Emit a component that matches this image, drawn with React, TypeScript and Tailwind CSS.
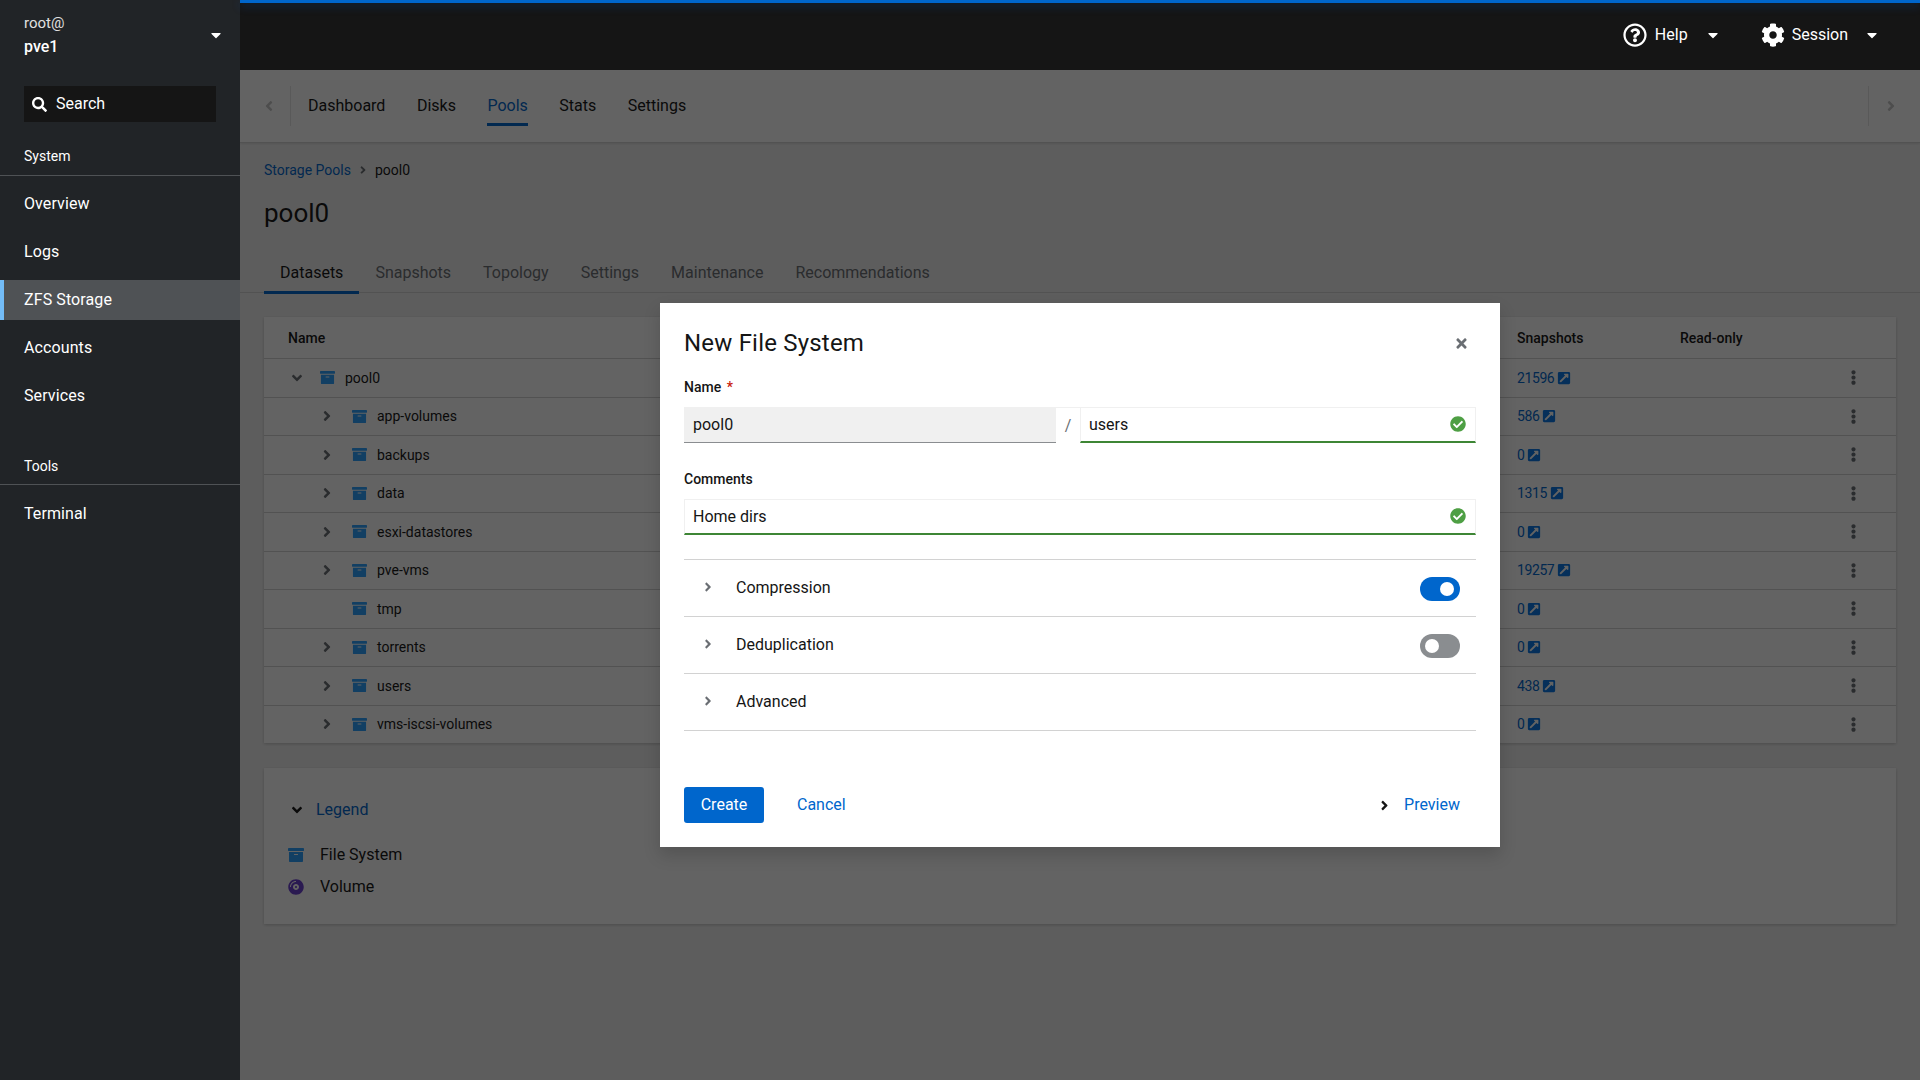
import React from "react";
import {
  FaAngleRight, FaAngleDown, FaEllipsisV, FaExternalLinkSquareAlt, FaCheckCircle, FaTimes,
  FaCaretDown, FaRegQuestionCircle, FaCog, FaSearch, FaArchive, FaCompactDisc,
} from "react-icons/fa";

const rows = [
  { name: "pool0", snaps: "21596", root: true, chev: true },
  { name: "app-volumes", snaps: "586", chev: true },
  { name: "backups", snaps: "0", chev: true },
  { name: "data", snaps: "1315", chev: true },
  { name: "esxi-datastores", snaps: "0", chev: true },
  { name: "pve-vms", snaps: "19257", chev: true },
  { name: "tmp", snaps: "0", chev: false },
  { name: "torrents", snaps: "0", chev: true },
  { name: "users", snaps: "438", chev: true },
  { name: "vms-iscsi-volumes", snaps: "0", chev: true },
];

function NavItem({ label, active }: { label: string; active?: boolean }) {
  return (
    <div className={active ? "h-10 flex items-center pl-5 border-l-4 border-[#73bcf7] bg-[#4f5255] text-white tracking-[0.1px]" : "h-10 flex items-center pl-6 text-white tracking-[0.1px]"}>
      {label}
    </div>
  );
}

function Sidebar() {
  return (
    <aside className="w-60 shrink-0 bg-[#212427] text-white flex flex-col">
      <div className="h-[70px] relative pl-6 pt-[11px] leading-[24px]">
        <div className="text-[15px] text-[#e0e0e0]">root@</div>
        <div className="font-medium">pve1</div>
        <FaCaretDown className="absolute left-[208px] top-[27px] text-white" size={16} />
      </div>
      <div className="mx-6 mt-4 h-9 bg-[#151515] flex items-center pl-2 gap-2">
        <FaSearch size={15} className="text-white" />
        <span className="ml-[1px]">Search</span>
      </div>
      <div className="mt-[24px] h-[30px] border-b border-[#4f5255] pl-6 text-sm leading-[20px]">System</div>
      <div className="flex flex-col gap-2 mt-2">
        <NavItem label="Overview" />
        <NavItem label="Logs" />
        <NavItem label="ZFS Storage" active />
        <NavItem label="Accounts" />
        <NavItem label="Services" />
      </div>
      <div className="mt-[40px] h-[29px] border-b border-[#4f5255] pl-6 text-sm leading-[20px]">Tools</div>
      <div className="mt-[9px]">
        <NavItem label="Terminal" />
      </div>
    </aside>
  );
}

function Header() {
  return (
    <header className="h-[70px] shrink-0 bg-[#151515] text-white relative flex items-center justify-end">
      <div className="absolute left-0 right-0 top-0 h-[3px] bg-[#0066cc] shadow-[0_3px_8px_rgba(0,80,170,0.45)]" />
      <FaRegQuestionCircle size={24} className="mr-[8px]" />
      <span>Help</span>
      <FaCaretDown size={16} className="ml-[17px] mr-[40px]" />
      <FaCog size={24} className="mr-[7px]" />
      <span>Session</span>
      <FaCaretDown size={16} className="ml-[16px] mr-[40px]" />
    </header>
  );
}

function Ext() {
  return <FaExternalLinkSquareAlt size={14} className="text-[#0a78e6] ml-[3px]" />;
}

function Main() {
  return (
    <div className="absolute inset-0 bg-[#f0f0f0] text-[#151515] overflow-hidden">
      <div className="h-[73px] bg-white border-b border-[#d2d2d2] shadow-[0_1px_2px_rgba(0,0,0,0.1)] flex items-center relative">
        <div className="w-[51px] h-10 flex items-center justify-end pr-[13px] border-r border-[#e4e4e4] text-[#c5c5c5]">
          <FaAngleRight size={16} className="rotate-180" />
        </div>
        <div className="flex gap-[31.5px] ml-[17px] h-10">
          {["Dashboard", "Disks", "Pools", "Stats", "Settings"].map((t) => (
            <div key={t} className={t === "Pools" ? "h-10 flex items-center border-b-[3px] border-[#0066cc] text-[#0066cc] pt-[3px]" : "h-10 flex items-center text-[#151515]"}>{t}</div>
          ))}
        </div>
        <div className="ml-auto w-[52px] h-10 flex items-center justify-start pl-[14px] border-l border-[#e4e4e4] text-[#c5c5c5]">
          <FaAngleRight size={16} />
        </div>
      </div>

      <div className="px-6 pt-[17px] h-[75px] text-sm flex items-start">
        <div className="flex items-center h-5">
          <span className="text-[#0066cc]">Storage Pools</span>
          <FaAngleRight size={12} className="mx-[6px] text-[#6a6e73]" />
          <span>pool0</span>
        </div>
      </div>
      <div className="px-6 -mt-[23px] text-[26px] leading-[36px] h-[36px]">pool0</div>

      <div className="mt-[28px] h-[34px] border-b border-[#d2d2d2] flex pl-6 text-[#6a6e73]">
        {["Datasets", "Snapshots", "Topology", "Settings", "Maintenance", "Recommendations"].map((t, i) => (
          <div key={t} className={i === 0 ? "h-[35px] px-4 pt-[2px] border-b-[3px] border-[#0066cc] text-[#151515]" : "h-[34px] px-4 pt-[2px]"}>{t}</div>
        ))}
      </div>

      <div className="mx-6 mt-6 bg-white shadow-[0_1px_3px_rgba(0,0,0,0.2)]">
        <div className="h-[41px] flex items-center text-sm font-medium">
          <div className="w-[1253px] pl-[24px]">Name</div>
          <div className="w-[163px]">Snapshots</div>
          <div>Read-only</div>
        </div>
        {rows.map((r) => (
          <div key={r.name} className="h-[38.5px] border-t border-[#d2d2d2] flex items-center text-sm">
            <div className={r.root ? "w-[1253px] pl-[26px] flex items-center" : "w-[1253px] pl-[56px] flex items-center"}>
              <div className={r.root ? "w-[14px] mr-[16px] flex justify-center text-[#6a6e73]" : "w-[14px] mr-[18px] flex justify-center text-[#6a6e73]"}>
                {r.chev ? (r.root ? <FaAngleDown size={16} /> : <FaAngleRight size={16} />) : null}
              </div>
              <FaArchive size={15} className="text-[#2ba0ff] mr-[10px]" />
              <span>{r.name}</span>
            </div>
            <div className="w-[163px] flex items-center text-[#0066cc] tracking-[-0.4px]">
              <span>{r.snaps}</span>
              <Ext />
            </div>
            <div className="flex-1" />
            <div className="w-[50px] text-[#6a6e73]"><FaEllipsisV size={15} /></div>
          </div>
        ))}
      </div>

      <div className="mx-6 mt-[25px] h-[156px] bg-white shadow-[0_1px_3px_rgba(0,0,0,0.2)] pl-6 pt-[30px]">
        <div className="flex items-center h-6 text-[#0066cc]">
          <FaAngleDown size={16} className="ml-[1px] mr-[11px] text-[#151515]" />
          <span>Legend</span>
        </div>
        <div className="flex items-center h-6 mt-[21px]">
          <FaArchive size={16} className="text-[#2ba0ff] mr-4" />
          <span>File System</span>
        </div>
        <div className="flex items-center h-6 mt-2">
          <FaCompactDisc size={16} className="text-[#6b3fd0] mr-4" />
          <span>Volume</span>
        </div>
      </div>
    </div>
  );
}

function Accordion({ label, toggle }: { label: string; toggle?: "on" | "off" }) {
  return (
    <div className="h-[57px] border-b border-[#d2d2d2] flex items-center pl-[19px] pr-4 text-[#151515]">
      <FaAngleRight size={14} className="text-[#6a6e73] w-[10px] mr-[23px] -mt-[2px]" />
      <span>{label}</span>
      {toggle === "on" && (
        <div className="ml-auto mt-[2px] w-10 h-6 rounded-full bg-[#0066cc] flex items-center justify-end pr-[6px]">
          <div className="w-[14px] h-[14px] rounded-full bg-white" />
        </div>
      )}
      {toggle === "off" && (
        <div className="ml-auto mt-[2px] w-10 h-6 rounded-full bg-[#8a8d90] flex items-center justify-start pl-[5px]">
          <div className="w-[14px] h-[14px] rounded-full bg-white" />
        </div>
      )}
    </div>
  );
}

function Modal() {
  return (
    <div className="w-[840px] h-[544px] bg-white shadow-[0_8px_16px_rgba(3,3,3,0.16)] px-6 pt-[24px] text-[#151515] relative">
      <div className="text-[24px] leading-[32px] h-[32px] font-normal tracking-[0.2px]">New File System</div>
      <FaTimes size={15} className="absolute left-[794px] top-[33px] text-[#6a6e73]" />
      <div className="mt-[18px] h-5 text-sm font-medium leading-5">
        Name <span className="text-[#c9190b] ml-[2px]">*</span>
      </div>
      <div className="mt-[10px] h-9 flex">
        <div className="w-[372px] h-9 bg-[#f0f0f0] border-b border-[#8a8d90] flex items-center pl-[9px] text-[#151515]">pool0</div>
        <div className="w-[24px] h-9 flex items-center justify-center border-t border-[#f0f0f0] text-[#6a6e73]">/</div>
        <div className="flex-1 h-9 border border-[#f0f0f0] border-b-2 border-b-[#3e8635] flex items-center pl-2 pr-[9px] justify-between">
          <span>users</span>
          <FaCheckCircle size={16} className="text-[#4e9f44] -mt-[1px]" />
        </div>
      </div>
      <div className="mt-[26px] h-5 text-sm font-medium leading-5">Comments</div>
      <div className="mt-[10px] h-9 border border-[#f0f0f0] border-b-2 border-b-[#3e8635] flex items-center pl-2 pr-[9px] justify-between">
        <span>Home dirs</span>
        <FaCheckCircle size={16} className="text-[#4e9f44] -mt-[1px]" />
      </div>
      <div className="mt-[24px] border-t border-[#d2d2d2]">
        <Accordion label="Compression" toggle="on" />
        <Accordion label="Deduplication" toggle="off" />
        <Accordion label="Advanced" />
      </div>
      <div className="mt-[56px] h-9 flex items-center">
        <div className="w-20 h-9 rounded-[3px] bg-[#0066cc] text-white flex items-center justify-center">Create</div>
        <span className="ml-[33px] text-[#0066cc]">Cancel</span>
        <div className="ml-auto flex items-center pr-4">
          <FaAngleRight size={15} className="mr-[12px] text-[#151515]" />
          <span className="text-[#0066cc]">Preview</span>
        </div>
      </div>
    </div>
  );
}

export default function App() {
  return (
    <div className="flex w-screen h-screen overflow-hidden font-['Roboto',sans-serif] text-base">
      <Sidebar />
      <div className="flex-1 flex flex-col min-w-0">
        <Header />
        <div className="relative flex-1">
          <Main />
          <div className="absolute inset-0 bg-[rgba(3,3,3,0.62)] flex items-center justify-center">
            <Modal />
          </div>
        </div>
      </div>
    </div>
  );
}
